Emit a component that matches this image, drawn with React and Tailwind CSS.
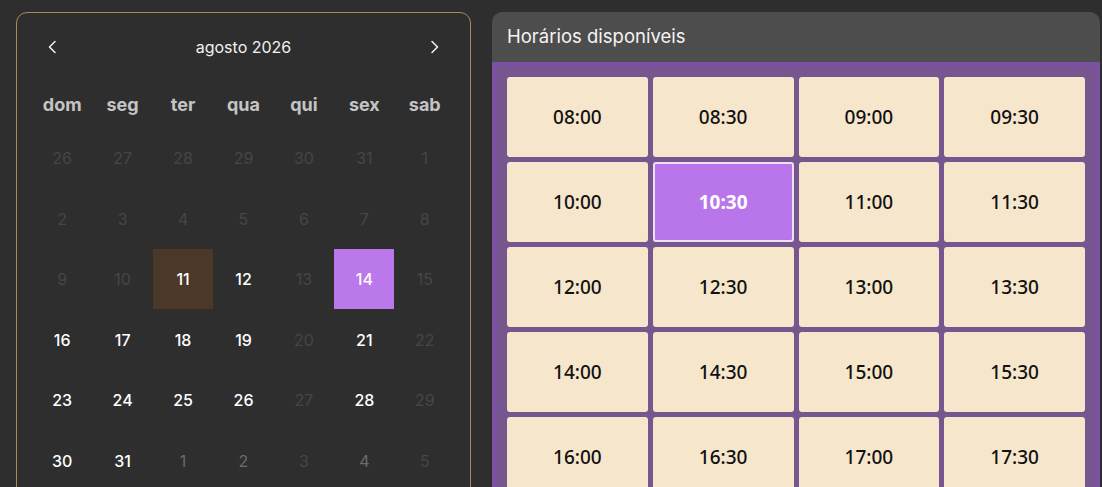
import { useState } from 'react';

const weekDays = ['dom', 'seg', 'ter', 'qua', 'qui', 'sex', 'sab'];

// estado: 'off' desativado, 'on' disponível, 'out' mês seguinte disponível
const days = [
  [26, 'off'], [27, 'off'], [28, 'off'], [29, 'off'], [30, 'off'], [31, 'off'], [1, 'off'],
  [2, 'off'], [3, 'off'], [4, 'off'], [5, 'off'], [6, 'off'], [7, 'off'], [8, 'off'],
  [9, 'off'], [10, 'off'], [11, 'today'], [12, 'on'], [13, 'off'], [14, 'selected'], [15, 'off'],
  [16, 'on'], [17, 'on'], [18, 'on'], [19, 'on'], [20, 'off'], [21, 'on'], [22, 'off'],
  [23, 'on'], [24, 'on'], [25, 'on'], [26, 'on'], [27, 'off'], [28, 'on'], [29, 'off'],
  [30, 'on'], [31, 'on'], [1, 'out'], [2, 'out'], [3, 'off'], [4, 'out'], [5, 'off'],
];

const times = [
  '08:00', '08:30', '09:00', '09:30',
  '10:00', '10:30', '11:00', '11:30',
  '12:00', '12:30', '13:00', '13:30',
  '14:00', '14:30', '15:00', '15:30',
  '16:00', '16:30', '17:00', '17:30',
];

const dayClass = {
  off: 'text-[#464646]',
  on: 'text-white font-medium',
  out: 'text-[#6c6c6c]',
  today: 'bg-[#4b3828] text-white font-medium',
  selected: 'bg-[#bb78ea] text-white font-medium',
};

function Chevron({ dir }) {
  return (
    <svg width="8" height="14" viewBox="0 0 8 14" fill="none">
      <polyline
        points={dir === 'left' ? '7,1.5 1.5,7 7,12.5' : '1,1.5 6.5,7 1,12.5'}
        stroke="#f2f2f2"
        strokeWidth="1.5"
        strokeLinecap="round"
        strokeLinejoin="round"
      />
    </svg>
  );
}

function Calendar() {
  return (
    <div className="w-[455px] shrink-0 rounded-[11px] border border-[#a38e55] px-[15px] pt-[14px] pb-4 font-['Inter',sans-serif]">
      {/* Cabeçalho do mês */}
      <div className="flex h-10 items-center justify-between pl-[16px] pr-[16px]">
        <Chevron dir="left" />
        <span className="text-[16px] text-[#f2f2f2]">agosto 2026</span>
        <Chevron dir="right" />
      </div>

      {/* Dias da semana */}
      <div className="mt-4 grid h-10 grid-cols-7 items-center">
        {weekDays.map((d) => (
          <div key={d} className="pt-[2px] text-center text-[18px] font-bold text-[#c4c4c4]">
            {d}
          </div>
        ))}
      </div>

      {/* Dias */}
      <div className="mt-[5px] grid grid-cols-7">
        {days.map(([n, s], i) => (
          <div key={i} className="flex h-[60.5px] items-center justify-center">
            <div className={`flex h-[60px] w-[60px] items-center justify-center text-[16px] ${dayClass[s]}`}>
              {n}
            </div>
          </div>
        ))}
      </div>
    </div>
  );
}

function TimeSlots() {
  const [selected, setSelected] = useState('10:30');

  return (
    <div className="w-[608px] shrink-0">
      <div className="flex h-[50px] items-center rounded-t-[10px] bg-[#4d4d4d] px-[15px] font-['Inter',sans-serif] text-[18.5px] text-[#f4f4f4]">
        Horários disponíveis
      </div>
      <div className="border-[5px] border-[#7b52a1] bg-[#77558f] p-[10px]">
        <div className="grid grid-cols-4 gap-[5px]">
          {times.map((t) => {
            const active = t === selected;
            return (
              <button
                key={t}
                onClick={() => setSelected(t)}
                className={`flex h-[80px] items-center justify-center rounded-[3px] font-['Noto_Sans',sans-serif] text-[19px] ${
                  active
                    ? 'border-2 border-[#ece0f6] bg-[#b976ea] font-bold text-white'
                    : 'bg-[#f6e6cc] font-medium text-[#111]'
                }`}
              >
                {t}
              </button>
            );
          })}
        </div>
      </div>
    </div>
  );
}

export default function App() {
  return (
    <div className="h-[487px] overflow-hidden bg-[#2e2e2e]">
      <div className="flex gap-[21px] pl-4 pt-3">
        <Calendar />
        <TimeSlots />
      </div>
    </div>
  );
}
